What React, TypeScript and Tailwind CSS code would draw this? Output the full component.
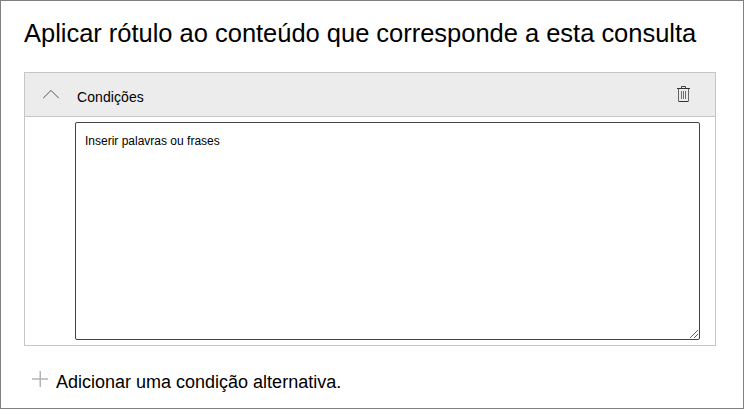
function ChevronUp() {
  return (
    <svg width="18" height="11" viewBox="0 0 18 11" fill="none" stroke="#555" strokeWidth="1">
      <path d="M1.2 9.2 9 1.4l7.8 7.8" />
    </svg>
  );
}

function Trash() {
  return (
    <svg width="13" height="16" viewBox="0 0 13 16" fill="none">
      <path d="M4.5 2V.5h4V2" stroke="#444" />
      <path d="M1.5 3v12M11.5 3v12" stroke="#666" />
      <path d="M0 2.5h13M1.5 15.5h10" stroke="#333" />
      <path d="M4.5 5v8M6.5 5v8M8.5 5v8" stroke="#707070" />
    </svg>
  );
}

function Plus() {
  return (
    <svg className="mt-px" width="16" height="16" viewBox="0 0 16 16" stroke="#b4b4b4" strokeWidth="1.5">
      <path d="M0 8h16M8.25 0v16" />
    </svg>
  );
}

function ResizeGrip() {
  return (
    <svg className="absolute right-[2px] bottom-[2px]" width="8" height="8" viewBox="0 0 8 8" stroke="#666" strokeWidth="1">
      <path d="M0 8 8 0M4 8l4-4" />
    </svg>
  );
}

export default function App() {
  return (
    <main className="flex h-[409px] w-[744px] flex-col border border-[#808080] bg-white px-[23px] pt-[16px] font-['Liberation_Sans',Arial,sans-serif] text-black">
      <h1 className="h-[55px] text-[25.5px] leading-[32px] tracking-[-0.02px] whitespace-nowrap">
        Aplicar rótulo ao conteúdo que corresponde a esta consulta
      </h1>
      <section className="h-[274px] w-[692px] border border-[#c6c6c6]">
        <header className="flex h-[44px] items-center border-b border-[#c6c6c6] bg-[#ececec] pr-[25px] pl-[17px]">
          <button type="button" aria-label="Recolher" className="w-[35px]">
            <ChevronUp />
          </button>
          <h2 className="pt-[5px] text-[14px] leading-[20px] tracking-[0.08px]">Condições</h2>
          <button type="button" aria-label="Excluir" className="ml-auto pb-px">
            <Trash />
          </button>
        </header>
        <div className="relative mt-[5px] ml-[50px] h-[218px] w-[625px]">
          <textarea
            placeholder="Inserir palavras ou frases"
            className="block h-full w-full resize-none rounded-[2px] border border-[#444] bg-white px-[9px] py-[10px] text-[12px] leading-[16px] placeholder:text-black placeholder:opacity-100"
          />
          <ResizeGrip />
        </div>
      </section>
      <button type="button" className="mt-[24px] flex items-start pl-[8px] text-[18px] leading-[24px] whitespace-nowrap">
        <Plus />
        <span className="pl-[8px]">Adicionar uma condição alternativa.</span>
      </button>
    </main>
  );
}
